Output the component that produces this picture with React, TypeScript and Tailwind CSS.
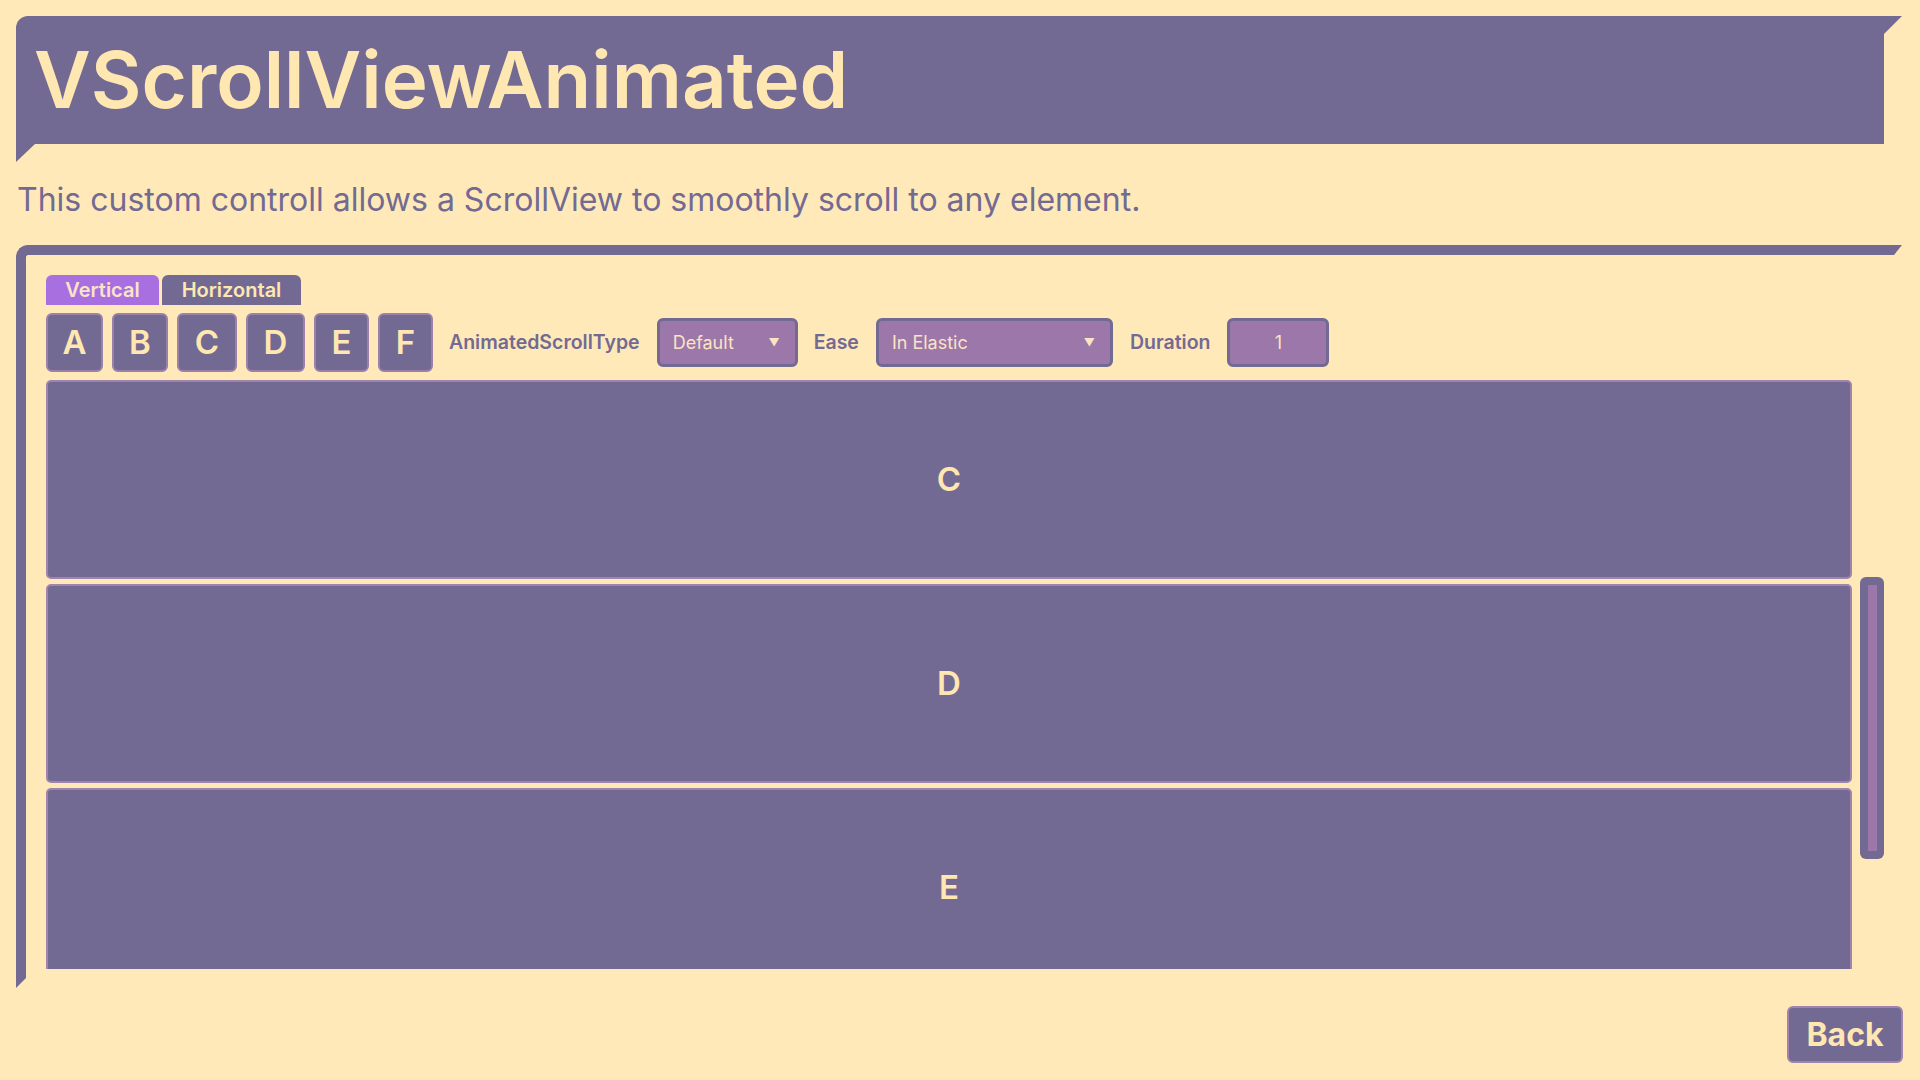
import React from 'react';

const letters = [
  { l: 'A', w: 'w-[57px]' },
  { l: 'B', w: 'w-[56px]' },
  { l: 'C', w: 'w-[60px]' },
  { l: 'D', w: 'w-[59px]' },
  { l: 'E', w: 'w-[55px]' },
  { l: 'F', w: 'w-[55px]' },
];
const visibleItems = ['C', 'D', 'E'];

const Dropdown: React.FC<{ value: string; width: string }> = ({ value, width }) => (
  <div
    className={`${width} h-[49px] flex items-center justify-between pl-[13px] pr-[15px] bg-[#9c77aa] border-[3px] border-[#736a93] rounded-[6px]`}
  >
    <span className="text-[18px] text-[#fbe3c3]">{value}</span>
    <span className="text-[11px] text-[#fbe3c3]">▼</span>
  </div>
);

const App: React.FC = () => {
  return (
    <div className="w-[1920px] h-[1080px] overflow-hidden bg-[#ffe9b9] font-['Inter',sans-serif] flex flex-col pt-[16px]">
      {/* header banner */}
      <div className="relative ml-[16px] w-[1868px] h-[128px] bg-[#736a93] rounded-tl-[12px] flex items-center pl-[18px]">
        <h1 className="text-[78px] leading-none font-semibold text-[#ffe7b2]">VScrollViewAnimated</h1>
        <div className="absolute left-[1868px] top-0 w-[18px] h-[18px] bg-[#736a93] [clip-path:polygon(0_0,100%_0,0_100%)]" />
        <div className="absolute left-0 top-[128px] w-[19px] h-[18px] bg-[#736a93] [clip-path:polygon(0_0,100%_0,0_100%)]" />
      </div>

      <p className="mt-[36px] h-[40px] leading-[40px] pl-[17px] text-[32px] text-[#736a93]">
        This custom controll allows a ScrollView to smoothly scroll to any element.
      </p>

      {/* panel */}
      <div className="relative mt-[25px] ml-[16px] w-[1878px] h-[733px] border-t-[10px] border-l-[10px] border-[#736a93] rounded-tl-[12px] pt-[20px] pl-[20px] pb-[9px] flex flex-col">
        <div className="absolute left-[1868px] -top-[10px] w-[8px] h-[10px] bg-[#736a93] [clip-path:polygon(0_0,100%_0,0_100%)]" />
        <div className="absolute -left-[10px] top-[723px] w-[10px] h-[10px] bg-[#736a93] [clip-path:polygon(0_0,100%_0,0_100%)]" />

        {/* tabs */}
        <div className="flex gap-[3px] h-[30px]">
          <div className="w-[113px] flex items-center justify-center bg-[#a86fe0] rounded-t-[6px] text-[20px] font-semibold text-[#fbe3c6]">
            Vertical
          </div>
          <div className="w-[139px] flex items-center justify-center bg-[#736a93] rounded-t-[6px] text-[20px] font-semibold text-[#ffe7b2]">
            Horizontal
          </div>
        </div>

        {/* controls row */}
        <div className="mt-[8px] h-[59px] flex items-center">
          <div className="flex gap-[9px] h-full">
            {letters.map(({ l, w }) => (
              <div
                key={l}
                className={`${w} h-full flex items-center justify-center bg-[#736a93] border-2 border-[#9b80a9] rounded-[6px] text-[33px] font-semibold text-[#ffe7b2]`}
              >
                {l}
              </div>
            ))}
          </div>
          <span className="ml-[16px] text-[19.5px] font-semibold text-[#736a93]">AnimatedScrollType</span>
          <div className="ml-[17px]">
            <Dropdown value="Default" width="w-[141px]" />
          </div>
          <span className="ml-[16px] text-[19.5px] font-semibold text-[#736a93]">Ease</span>
          <div className="ml-[17px]">
            <Dropdown value="In Elastic" width="w-[237px]" />
          </div>
          <span className="ml-[17px] text-[19.5px] font-semibold text-[#736a93]">Duration</span>
          <div className="ml-[17px] w-[102px] h-[49px] flex items-center justify-center bg-[#9c77aa] border-[3px] border-[#736a93] rounded-[6px] text-[18px] text-[#fbe3c3]">
            1
          </div>
        </div>

        {/* scroll view */}
        <div className="mt-[8px] h-[589px] flex gap-[8px]">
          <div className="w-[1806px] h-full overflow-hidden flex flex-col gap-[5px]">
            {visibleItems.map((l) => (
              <div
                key={l}
                className="shrink-0 h-[199px] flex items-center justify-center bg-[#736a93] border-2 border-[#a184ad] rounded-[5px] text-[33px] font-semibold text-[#ffe7b2]"
              >
                {l}
              </div>
            ))}
          </div>
          <div className="mt-[197px] w-[24px] h-[282px] bg-[#736a93] rounded-[6px] flex justify-center py-[8px]">
            <div className="w-[9px] h-full bg-[#9c77aa]" />
          </div>
        </div>
      </div>

      {/* footer */}
      <div className="mt-[28px] pr-[17px] flex justify-end">
        <button className="w-[116px] h-[57px] flex items-center justify-center bg-[#736a93] border-2 border-[#a184ad] rounded-[6px] text-[32px] font-bold text-[#ffe7b2]">
          Back
        </button>
      </div>
    </div>
  );
};

export default App;
